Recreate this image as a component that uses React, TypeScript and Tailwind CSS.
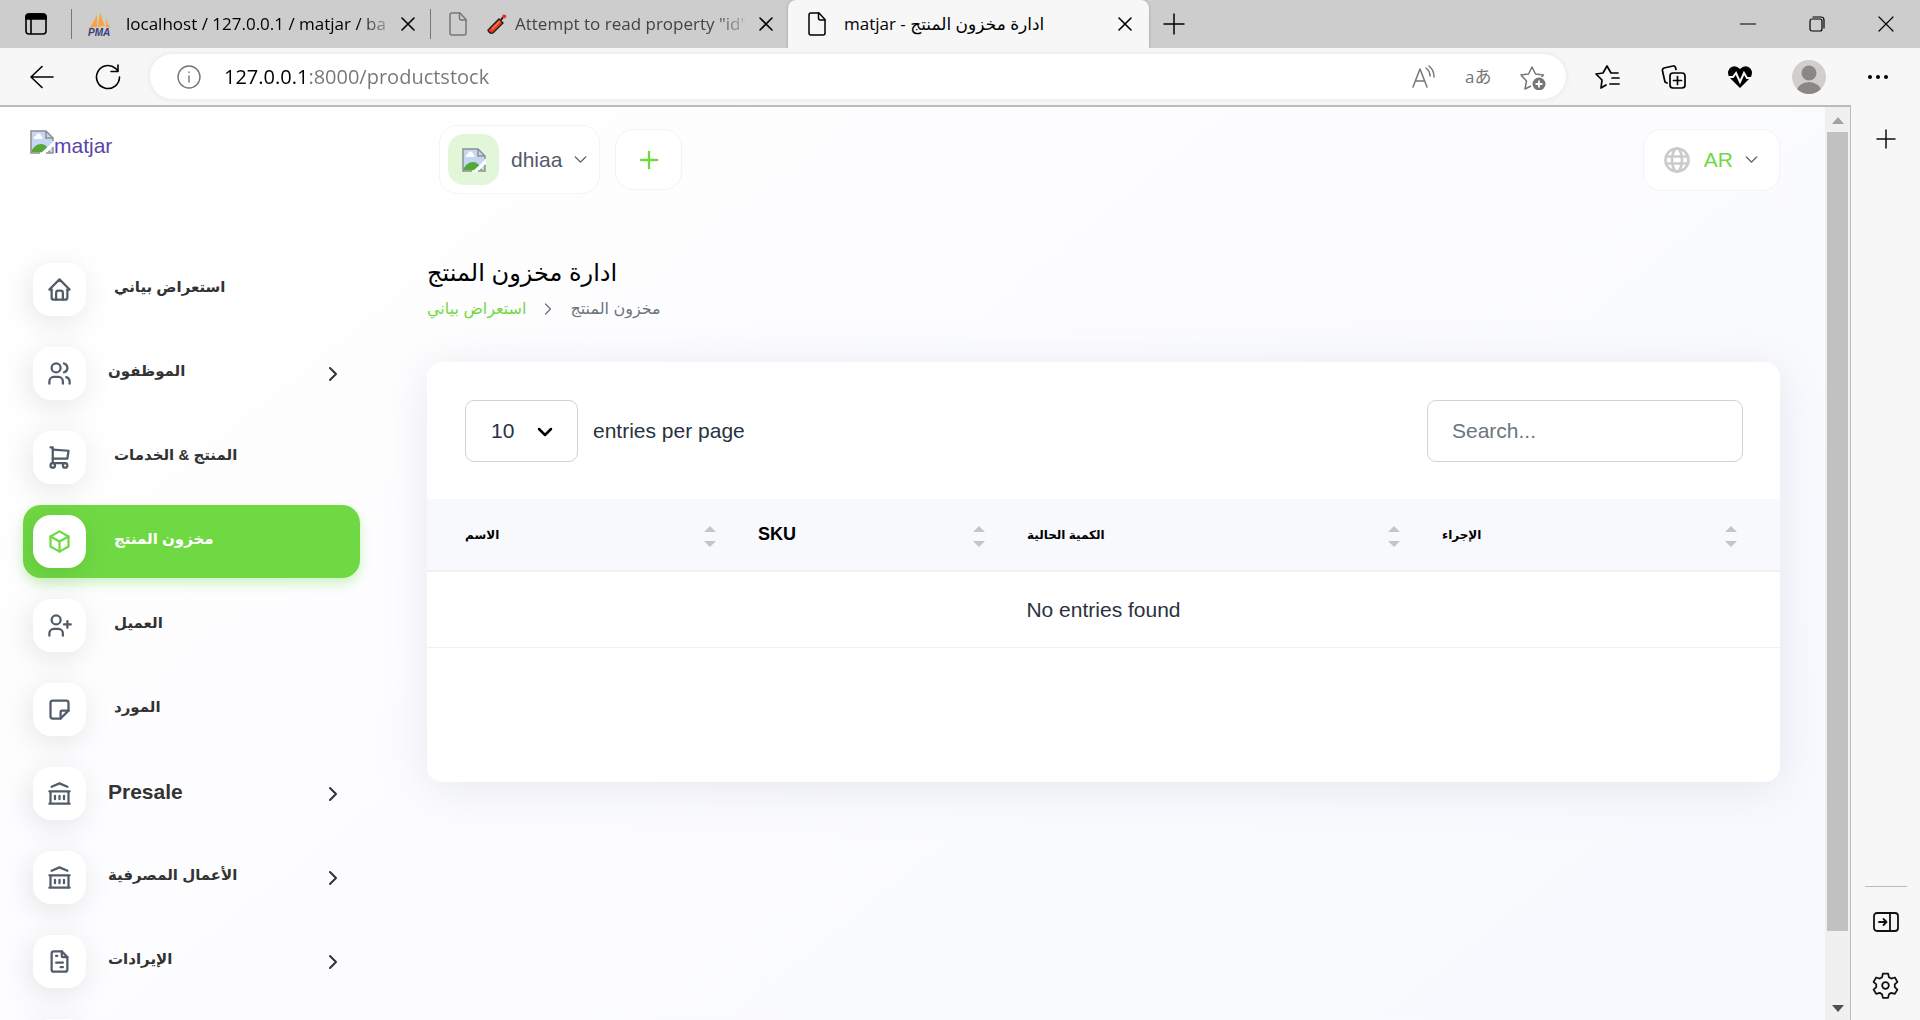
import React from "react";
import { ChevronDown, ChevronRight, Plus } from "lucide-react";

type IconProps = { children: React.ReactNode; size?: string; stroke?: number; box?: string };

function Glyph({ children, size = "size-6", stroke = 2, box = "0 0 24 24" }: IconProps) {
  return (
    <svg
      viewBox={box}
      className={`${size} shrink-0`}
      fill="none"
      stroke="currentColor"
      strokeWidth={stroke}
      strokeLinecap="round"
      strokeLinejoin="round"
      aria-hidden="true"
    >
      {children}
    </svg>
  );
}

const icons = {
  home: (
    <>
      <path d="M5 12H3l9-9 9 9h-2" />
      <path d="M5 12v7a2 2 0 0 0 2 2h10a2 2 0 0 0 2-2v-7" />
      <path d="M9 21v-6a2 2 0 0 1 2-2h2a2 2 0 0 1 2 2v6" />
    </>
  ),
  users: (
    <>
      <circle cx="9" cy="7" r="4" />
      <path d="M3 21v-2a4 4 0 0 1 4-4h4a4 4 0 0 1 4 4v2" />
      <path d="M16 3.13a4 4 0 0 1 0 7.75" />
      <path d="M21 21v-2a4 4 0 0 0-3-3.85" />
    </>
  ),
  cart: (
    <>
      <circle cx="6" cy="19" r="2" />
      <circle cx="17" cy="19" r="2" />
      <path d="M17 17H6V3H4" />
      <path d="M6 5l14 1-1 7H6" />
    </>
  ),
  box: (
    <>
      <path d="M12 3l8 4.5v9L12 21l-8-4.5v-9L12 3" />
      <path d="M12 12l8-4.5M12 12v9M12 12L4 7.5" />
    </>
  ),
  userPlus: (
    <>
      <circle cx="9" cy="7" r="4" />
      <path d="M3 21v-2a4 4 0 0 1 4-4h4a4 4 0 0 1 4 4v2" />
      <path d="M16 11h6m-3-3v6" />
    </>
  ),
  note: (
    <>
      <path d="M13 20l7-7" />
      <path d="M13 20v-6a1 1 0 0 1 1-1h6V6a2 2 0 0 0-2-2H6a2 2 0 0 0-2 2v12a2 2 0 0 0 2 2h7" />
    </>
  ),
  bank: (
    <path d="M3 21h18M3 10h18M5 6l7-3 7 3M4 10v11M20 10v11M8 14v3M12 14v3M16 14v3" />
  ),
  invoice: (
    <>
      <path d="M14 3v4a1 1 0 0 0 1 1h4" />
      <path d="M17 21H7a2 2 0 0 1-2-2V5a2 2 0 0 1 2-2h7l5 5v11a2 2 0 0 1-2 2z" />
      <path d="M9 7h1M9 13h6M13 17h2" />
    </>
  ),
};

const navItems: { label: string; icon: keyof typeof icons; sub?: boolean; active?: boolean }[] = [
  { label: "استعراض بياني", icon: "home" },
  { label: "الموظفون", icon: "users", sub: true },
  { label: "المنتج & الخدمات", icon: "cart" },
  { label: "مخزون المنتج", icon: "box", active: true },
  { label: "العميل", icon: "userPlus" },
  { label: "المورد", icon: "note" },
  { label: "Presale", icon: "bank", sub: true },
  { label: "الأعمال المصرفية", icon: "bank", sub: true },
  { label: "الإيرادات", icon: "invoice", sub: true },
];

function NavTile({ children }: { children?: React.ReactNode }) {
  return (
    <span className="flex size-[53px] shrink-0 items-center justify-center rounded-[18px] bg-white shadow-[-3px_6px_30px_rgba(0,0,0,0.1)]">
      {children}
    </span>
  );
}

function BrokenImage() {
  return (
    <svg viewBox="0 0 24 24" className="size-6 shrink-0" aria-hidden="true">
      <path d="M1 1h15l7 7v15H1z" fill="#c6d7f5" />
      <path d="M4 8a2 2 0 0 1 2-2 2.500 2.500 0 0 1 5 0 2 2 0 0 1 1 3H4z" fill="#fff" />
      <path d="M1 22c2-5 6-8 10-8s7 3 9 8z" fill="#54a936" />
      <path d="M24 11v4l-8 9h-6z" fill="#fff" />
      <path d="M10 23H1V1h15l7 7v3M16 1v7h7M16 23h7v-6" fill="none" stroke="#8f8f8f" strokeWidth="1.500" />
    </svg>
  );
}

function PageIcon() {
  return (
    <Glyph size="h-6 w-[18px]" stroke={1.5} box="0 0 18 24">
      <path d="M3 1h8l6 6.500V21a2 2 0 0 1-2 2H3a2 2 0 0 1-2-2V3a2 2 0 0 1 2-2z" />
      <path d="M10.500 1v5a2 2 0 0 0 2 2H17" />
    </Glyph>
  );
}

function CloseIcon() {
  return (
    <Glyph size="size-[14px]" stroke={1.6} box="0 0 14 14">
      <path d="M1 1l12 12M13 1L1 13" />
    </Glyph>
  );
}

function Sorter() {
  return (
    <svg viewBox="0 0 12 22" className="mt-1 h-[22px] w-3 shrink-0" fill="#c4c5ca" aria-hidden="true">
      <path d="M6 0l6 6H0zM0 15h12l-6 6z" />
    </svg>
  );
}

function TabStrip() {
  return (
    <div className="flex h-12 shrink-0 items-center bg-[#cdcdcd] text-[17px] text-black">
      <button className="ml-[25px]" aria-label="Tab actions">
        <svg viewBox="0 0 22 22" className="size-[22px]" fill="none" stroke="#000" strokeWidth="1.600" aria-hidden="true">
          <rect x="1" y="1" width="20" height="20" rx="3" />
          <path d="M1 4a3 3 0 0 1 3-3h14a3 3 0 0 1 3 3v2H1z" fill="#000" />
          <path d="M6 6v15" />
        </svg>
      </button>
      <span className="ml-6 h-[30px] w-px bg-[#777]" />
      <svg viewBox="0 0 24 25" className="ml-4 h-[25px] w-6 shrink-0" aria-hidden="true">
        <path d="M9 3c-2 4-5 9-7 13 3-1 5-1 7-1zM13 0c-2 5-3 10-3 15 2-1 5-1 7-1-2-4-4-9-4-14zM18 5c0 4 2 8 5 11-2-1-4-1-5-1z" fill="#f7a540" />
        <text x="0" y="24" fontSize="10" fontWeight="700" fontStyle="italic" fill="#3b3d78" fontFamily="Liberation Sans, sans-serif">PMA</text>
      </svg>
      <button className="ml-[14px] w-[262px] shrink-0 overflow-hidden text-left whitespace-nowrap [mask-image:linear-gradient(to_right,#000_88%,rgba(0,0,0,0.2))]">
        localhost / 127.0.0.1 / matjar / ba
      </button>
      <button className="ml-[13px]" aria-label="Close tab"><CloseIcon /></button>
      <span className="ml-[15px] h-[30px] w-px bg-[#777]" />
      <span className="ml-[18px] text-[#777]"><PageIcon /></span>
      <button className="ml-5 flex w-[258px] shrink-0 items-center gap-2 overflow-hidden whitespace-nowrap text-[#444] [mask-image:linear-gradient(to_right,#000_88%,rgba(0,0,0,0.2))]">
        <svg viewBox="0 0 20 20" className="size-5 shrink-0" aria-hidden="true">
          <path d="M2 15L12 5l4 4L6 19q-2 1-4-1t0-3z" fill="#ea3a1c" stroke="#1b1b1b" strokeWidth="1.300" />
          <path d="M5 15l8-8" stroke="#ff7a55" strokeWidth="1.500" />
          <path d="M14 6l2-3 3-1" fill="none" stroke="#1b1b1b" strokeWidth="2" />
          <circle cx="17" cy="2.500" r="2" fill="#f5331d" />
        </svg>
        Attempt to read property "id"
      </button>
      <button className="ml-[14px]" aria-label="Close tab"><CloseIcon /></button>
      <div className="ml-[15px] flex h-full w-[361px] shrink-0 items-center rounded-t-lg bg-[#f7f7f7] pr-[17px] pl-5 shadow-[0_0_3px_rgba(0,0,0,0.25)]">
        <PageIcon />
        <button className="ml-[18px] flex-1 text-left whitespace-nowrap">
          matjar - <bdi>ادارة مخزون المنتج</bdi>
        </button>
        <button aria-label="Close tab"><CloseIcon /></button>
      </div>
      <button className="ml-[14px]" aria-label="New tab">
        <Glyph size="size-[22px]" stroke={1.5} box="0 0 22 22"><path d="M11 1v20M1 11h20" /></Glyph>
      </button>
      <div className="mr-[26px] ml-auto flex items-center gap-[53px]">
        <button aria-label="Minimize"><Glyph size="size-4" stroke={1.2} box="0 0 16 16"><path d="M0 8h16" /></Glyph></button>
        <button aria-label="Restore">
          <Glyph size="size-4" stroke={1.2} box="0 0 16 16">
            <rect x="1" y="3" width="12" height="12" rx="2" />
            <path d="M4 1h8a3 3 0 0 1 3 3v8" />
          </Glyph>
        </button>
        <button aria-label="Close window"><Glyph size="size-4" stroke={1.2} box="0 0 16 16"><path d="M1 1l14 14M15 1L1 15" /></Glyph></button>
      </div>
    </div>
  );
}

function Toolbar() {
  return (
    <div className="flex h-[57px] shrink-0 items-center bg-[#f7f7f7] text-black">
      <button className="ml-[30px]" aria-label="Back">
        <Glyph size="size-6" stroke={1.6}><path d="M23 12H1M12 1.500L1 12l11 10.500" /></Glyph>
      </button>
      <button className="ml-[41px]" aria-label="Refresh">
        <Glyph size="size-[26px]" stroke={1.6} box="0 0 26 26">
          <path d="M24.500 13a11.500 11.500 0 1 1-4-8.700L23 7M23 1v6.500h-7" />
        </Glyph>
      </button>
      <div className="ml-[29px] flex h-[45px] flex-1 items-center rounded-full bg-white pr-5 pl-[27px] text-[#767676] shadow-[0_0_6px_rgba(0,0,0,0.08)]">
        <Glyph size="size-6" stroke={1.4}><circle cx="12" cy="12" r="11" /><path d="M12 11v6M12 7v0.500" /></Glyph>
        <input
          type="text"
          aria-label="Address"
          defaultValue="127.0.0.1:8000/productstock"
          className="ml-[23px] min-w-0 flex-1 bg-linear-to-r from-black from-[85px] to-[#767676] to-[85px] bg-clip-text text-[20px] text-transparent caret-black outline-none"
        />
        <div className="flex items-center gap-[29px]">
          <button aria-label="Read aloud">
            <Glyph size="size-6" stroke={1.5}>
              <path d="M1 22L8 4l7 18M3.500 16h9M14 3a10 10 0 0 1 4 8M17 1a14 14 0 0 1 5 11" />
            </Glyph>
          </button>
          <button className="w-[26px] font-['Open_Sans','Noto_Sans_CJK_JP',sans-serif] text-[17px] whitespace-nowrap" aria-label="Translate">aあ</button>
          <button aria-label="Add to favorites">
            <svg viewBox="0 0 26 26" className="size-[26px]" fill="none" stroke="currentColor" strokeWidth="1.500" strokeLinejoin="round" aria-hidden="true">
              <path d="M11 22l-6 3 1.500-8L1 11l7.500-1L12 3l3.500 7 8 1-2 2" />
              <circle cx="19" cy="20" r="6.500" fill="currentColor" stroke="none" />
              <path d="M19 16.500v7M15.500 20h7" stroke="#fff" strokeWidth="1.800" />
            </svg>
          </button>
        </div>
      </div>
      <div className="mr-[31px] ml-[29px] flex items-center">
        <button aria-label="Favorites">
          <Glyph size="size-[26px]" stroke={1.7} box="0 0 26 26">
            <path d="M23 9h-7l-4-7-4 7-7 1 6 6-1 8 5-3M17 14h7M15 20h9" />
          </Glyph>
        </button>
        <button className="ml-10" aria-label="Collections">
          <Glyph size="size-[26px]" stroke={1.7} box="0 0 26 26">
            <rect x="9" y="9" width="15" height="15" rx="3" />
            <path d="M16.500 12.500v8M12.500 16.500h8M6 19l-2-1L1.500 7q-.5-2 1.500-3l9-2q2-.5 2.500 1.500l.5 2" />
          </Glyph>
        </button>
        <button className="ml-10" aria-label="Browser essentials">
          <svg viewBox="0 0 26 24" className="h-6 w-[26px]" aria-hidden="true">
            <path d="M13 23L3 13q-4-5 0-10 5-4 10 1 5-5 10-1 4 5 0 10z" fill="#000" />
            <path d="M0 12h6l3-4 4 9 4-9 3 5h6" fill="none" stroke="#f7f7f7" strokeWidth="2" />
          </svg>
        </button>
        <button className="ml-[39px]" aria-label="Profile">
          <svg viewBox="0 0 34 34" className="size-[34px]" aria-hidden="true">
            <defs><clipPath id="avatar"><circle cx="17" cy="17" r="17" /></clipPath></defs>
            <circle cx="17" cy="17" r="17" fill="#d1cfcb" />
            <g fill="#8b8784" clipPath="url(#avatar)"><circle cx="17" cy="13" r="7.500" /><ellipse cx="17" cy="31" rx="12" ry="9" /></g>
          </svg>
        </button>
        <button className="ml-[41px]" aria-label="Settings and more">
          <svg viewBox="0 0 22 6" className="h-[6px] w-[22px]" aria-hidden="true">
            <circle cx="3" cy="3" r="2" /><circle cx="11" cy="3" r="2" /><circle cx="19" cy="3" r="2" />
          </svg>
        </button>
      </div>
    </div>
  );
}

function Sidebar() {
  return (
    <aside className="w-[385px] shrink-0">
      <a href="#home" className="mt-[23px] ml-[30px] flex h-6 w-fit text-[21px] leading-8 text-[#5a45a8]">
        <BrokenImage />matjar
      </a>
      <nav className="mt-[99px] mr-[25px] ml-[23px] flex flex-col gap-[11px] font-bold text-[#333]">
        {navItems.map((item) => (
          <a
            key={item.label}
            href="#nav"
            className={
              item.active
                ? "flex h-[73px] items-center rounded-[18px] bg-[#6fd943] px-[10px] text-white shadow-[0_6px_12px_rgba(111,217,67,0.3)]"
                : "flex h-[73px] items-center px-[10px]"
            }
          >
            <NavTile>
              <span className={item.active ? "text-[#6fd943]" : "text-[#525b69]"}>
                <Glyph size="size-[27px]">{icons[item.icon]}</Glyph>
              </span>
            </NavTile>
            <span
              className={
                item.label === "Presale"
                  ? "ml-[22px] flex-1 pb-1 text-[21px]"
                  : item.sub
                    ? "ml-[22px] flex-1 pb-1 text-[15px]"
                    : "ml-7 flex-1 pb-1 text-[15px]"
              }
            >
              <bdi>{item.label}</bdi>
            </span>
            {item.sub && <ChevronRight className="mr-[5px] size-6" strokeWidth={2} />}
          </a>
        ))}
        <a href="#nav" className="flex h-[73px] items-center px-[10px]" aria-label="More">
          <NavTile />
        </a>
      </nav>
    </aside>
  );
}

const headers = [
  { label: "الاسم", cell: "w-[301px] pl-[38px] pr-3" },
  { label: "SKU", cell: "w-[269px] pl-[30px] pr-3" },
  { label: "الكمية الحالية", cell: "w-[415px] pl-[30px] pr-3" },
  { label: "الإجراء", cell: "w-[368px] pl-[30px] pr-[43px]" },
];

function Content() {
  return (
    <main className="min-w-0 flex-1 pr-[45px] pl-[42px]">
      <header className="mt-[18px] ml-3 flex items-center text-[21px] text-[#525b69]">
        <button className="flex h-[69px] items-center rounded-[18px] border border-[#f3f3f5] bg-white px-2">
          <span className="flex size-[51px] items-center justify-center rounded-2xl bg-[#e2f7d9]"><BrokenImage /></span>
          <span className="ml-3">dhiaa</span>
          <ChevronDown className="ml-2 size-[21px]" strokeWidth={1.6} />
        </button>
        <button className="ml-[15px] flex h-[61px] w-[67px] items-center justify-center rounded-[18px] border border-[#f3f3f5] bg-white text-[#6fd943]" aria-label="Add">
          <Plus className="size-7" strokeWidth={2} />
        </button>
        <button className="ml-auto flex h-[62px] items-center rounded-[18px] border border-[#f3f3f5] bg-white pr-[17px] pl-5">
          <span className="text-[#cbcbcb]">
            <Glyph size="size-[26px]" stroke={2.6} box="0 0 26 26">
              <circle cx="13" cy="13" r="11.500" />
              <ellipse cx="13" cy="13" rx="5" ry="11.500" />
              <path d="M2 9.500h22M2 16.500h22" />
            </Glyph>
          </span>
          <span className="ml-[14px] text-[#6fd943]">AR</span>
          <ChevronDown className="ml-2 size-[21px]" strokeWidth={1.6} />
        </button>
      </header>

      <h1 className="mt-[61px] h-9 text-[24px] leading-9 text-black"><bdi>ادارة مخزون المنتج</bdi></h1>
      <nav className="flex h-9 items-center text-[16px] text-[#6c757d]" aria-label="Breadcrumb">
        <a href="#home" className="text-[#6fd943]"><bdi>استعراض بياني</bdi></a>
        <ChevronRight className="mx-3 size-5" strokeWidth={1.6} />
        <bdi>مخزون المنتج</bdi>
      </nav>

      <section className="mt-[35px] rounded-[15px] bg-white pb-[134px] text-[21px] text-[#293240] shadow-[0_6px_45px_rgba(182,186,203,0.3)]">
        <div className="flex items-center justify-between pt-[38px] pr-[37px] pb-[37px] pl-[38px]">
          <div className="flex items-center">
            <div className="relative">
              <select id="per-page" className="h-[62px] w-[113px] appearance-none rounded-[9px] border border-[#ced4da] bg-white pl-[25px] outline-none" defaultValue="10">
                <option>10</option>
                <option>25</option>
              </select>
              <ChevronDown className="pointer-events-none absolute top-5 right-[21px] size-6 text-black" strokeWidth={2.5} />
            </div>
            <label htmlFor="per-page" className="ml-[15px]">entries per page</label>
          </div>
          <input
            type="search"
            aria-label="Search"
            placeholder="Search..."
            className="h-[62px] w-[316px] rounded-[9px] border border-[#ced4da] bg-white px-6 outline-none placeholder:text-[#6c757d]"
          />
        </div>
        <table className="w-full table-fixed border-collapse">
          <thead>
            <tr className="h-[72px] border-b-2 border-[#f1f1f1] bg-[#f8f9fd] text-black">
              {headers.map((h) => (
                <th key={h.label} className={h.cell} scope="col">
                  <button className="flex w-full items-center justify-between font-bold">
                    <bdi className={h.label === "SKU" ? "text-[18px]" : "text-[12px]"}>{h.label}</bdi>
                    <Sorter />
                  </button>
                </th>
              ))}
            </tr>
          </thead>
          <tbody>
            <tr className="h-[76px] border-b border-[#f1f1f1]">
              <td colSpan={4} className="text-center">No entries found</td>
            </tr>
          </tbody>
        </table>
      </section>
    </main>
  );
}

function Scrollbar() {
  return (
    <div className="flex w-[25px] shrink-0 flex-col items-center bg-[#f0f0f0]">
      <svg viewBox="0 0 12 7" className="mt-[10px] h-[7px] w-3" fill="#a3a3a3" aria-hidden="true"><path d="M6 0l6 7H0z" /></svg>
      <div className="mt-2 w-[21px] flex-1 bg-[#c1c1c1]" />
      <svg viewBox="0 0 12 7" className="mt-[74px] mb-[8px] h-[7px] w-3" fill="#505050" aria-hidden="true"><path d="M0 0h12L6 7z" /></svg>
    </div>
  );
}

function EdgeBar() {
  return (
    <div className="flex w-[69px] shrink-0 flex-col items-center bg-[#f7f7f7] text-[#111]">
      <button className="mt-6" aria-label="Customize">
        <Glyph size="size-5" stroke={1.5} box="0 0 20 20"><path d="M10 1v18M1 10h18" /></Glyph>
      </button>
      <span className="mt-auto h-px w-[42px] bg-[#bbb]" />
      <button className="mt-[25px]" aria-label="Hide sidebar">
        <Glyph size="h-[20px] w-[26px]" stroke={1.8} box="0 0 26 20">
          <rect x="1" y="1" width="24" height="18" rx="3" />
          <path d="M17 1v18M6 10h7M10.500 7l3 3-3 3" />
        </Glyph>
      </button>
      <button className="mt-10 mb-[21px]" aria-label="Settings">
        <Glyph size="size-[27px]" stroke={1.7} box="0 0 26 26">
          <circle cx="13" cy="13" r="3.200" />
          <path d="M10.500 1.500h5l.8 3.500 2.200 1.300 3.500-1 2.500 4.200-2.600 2.400v2.600l2.600 2.400-2.500 4.200-3.500-1-2.200 1.300-.8 3.500h-5l-.8-3.500-2.200-1.300-3.500 1-2.500-4.200 2.600-2.400v-2.600L1.500 9.500 4 5.300l3.500 1L9.700 5z" />
        </Glyph>
      </button>
    </div>
  );
}

export default function App() {
  return (
    <div className="flex h-screen flex-col overflow-hidden bg-[#f7f7f7] font-['Open_Sans','DejaVu_Sans',sans-serif]">
      <TabStrip />
      <Toolbar />
      <div className="flex min-h-0 flex-1">
        <div className="flex min-w-0 flex-1 border-t-2 border-r border-[#bbb]">
          <div className="flex min-w-0 flex-1 overflow-hidden bg-linear-[141deg] from-white from-5% to-[#f8f9fe] to-95% font-['Liberation_Sans','DejaVu_Sans',sans-serif]">
            <Sidebar />
            <Content />
          </div>
          <Scrollbar />
        </div>
        <EdgeBar />
      </div>
    </div>
  );
}
